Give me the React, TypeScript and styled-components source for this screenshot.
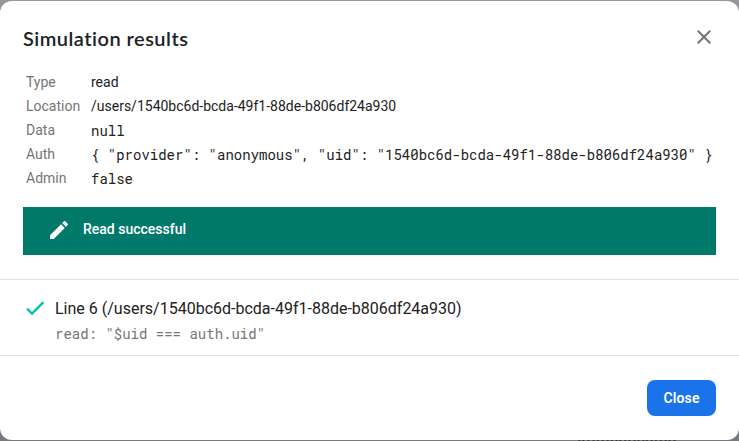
import React from "react";
import styled, { createGlobalStyle } from "styled-components";

const GlobalStyle = createGlobalStyle`
  *, *::before, *::after { box-sizing: border-box; }
  body {
    margin: 0;
    overflow: hidden;
    background: #909296;
    font-family: Roboto, "Liberation Sans", sans-serif;
    color: #212121;
  }
`;

const Page = styled.div`
  position: relative;
  width: 739px;
  height: 441px;
  overflow: hidden;
  padding-top: 1px;
  background: linear-gradient(#94969a 0 30px, #77797c 420px);
`;

const BackdropLabel = styled.div`
  position: absolute;
  left: 576px;
  top: 433px;
  font: 500 16px/18px Roboto, sans-serif;
  color: #33363a;
`;

const Dialog = styled.section`
  position: relative;
  display: flex;
  flex-direction: column;
  height: 439px;
  border-radius: 12px;
  background: #fff;
`;

const Header = styled.header`
  display: flex;
  justify-content: space-between;
  align-items: flex-start;
  height: 69px;
  padding: 24px 23px 0;
`;

const Title = styled.h2`
  margin: -1px 0 0;
  font: 600 20px/28px "Google Sans", Lato, sans-serif;
  letter-spacing: 0.48px;
  color: #202124;
`;

const IconButton = styled.button`
  display: flex;
  padding: 0;
  border: 0;
  background: none;
  color: #757575;
`;

const Details = styled.dl`
  display: grid;
  grid-template-columns: 65px 1fr;
  grid-auto-rows: 24px;
  height: 137px;
  margin: 0;
  padding-left: 26px;
  font-size: 14px;
  line-height: 24px;
`;

const Term = styled.dt`
  color: #757575;
`;

const Value = styled.dd<{ $code?: boolean }>`
  margin: 0;
  white-space: nowrap;
  ${({ $code }) =>
    $code && `padding-top: 1px; font-family: "Roboto Mono", "Liberation Mono", monospace;`}
`;

const Banner = styled.div`
  display: flex;
  gap: 12px;
  height: 48px;
  margin: 0 23px 24px;
  padding: 11px 24px 0;
  background: #00796b;
  color: #fff;
  font: 500 14px/22px Roboto, sans-serif;
`;

const Rule = styled.div`
  display: flex;
  gap: 8px;
  height: 77px;
  padding: 17px 23px 0;
  border: solid #e0e0e0;
  border-width: 1px 0;
`;

const RuleTitle = styled.div`
  font-size: 16px;
  line-height: 24px;
`;

const RuleCode = styled.code`
  display: block;
  padding-top: 2px;
  font: 14px/22px "Roboto Mono", "Liberation Mono", monospace;
  color: #757575;
`;

const Footer = styled.footer`
  display: flex;
  justify-content: flex-end;
  padding: 24px 23px;
`;

const CloseButton = styled.button`
  width: 69px;
  height: 36px;
  padding: 0;
  border: 0;
  border-radius: 8px;
  background: #1a73e8;
  color: #fff;
  font: 600 14px/36px Roboto, sans-serif;
  letter-spacing: 0.15px;
`;

const Icon = ({ d, stroke }: { d: string; stroke?: number }) => (
  <svg
    width={24}
    height={24}
    viewBox="0 0 24 24"
    fill="currentColor"
    stroke={stroke ? "currentColor" : "none"}
    strokeWidth={stroke}
    aria-hidden
  >
    <path d={d} />
  </svg>
);

const CheckSlot = styled.span`
  display: flex;
  margin-top: -1px;
  color: #00bfa5;
`;

const rows = [
  { term: "Type", value: "read" },
  { term: "Location", value: "/users/1540bc6d-bcda-49f1-88de-b806df24a930" },
  { term: "Data", value: "null", code: true },
  {
    term: "Auth",
    value: '{ "provider": "anonymous", "uid": "1540bc6d-bcda-49f1-88de-b806df24a930" }',
    code: true,
  },
  { term: "Admin", value: "false", code: true },
];

export default function App() {
  return (
    <>
      <GlobalStyle />
      <Page>
        <BackdropLabel>Authenticated</BackdropLabel>
        <Dialog role="dialog">
          <Header>
            <Title>Simulation results</Title>
            <IconButton aria-label="Dismiss">
              <Icon d="M19 6.41L17.59 5 12 10.59 6.41 5 5 6.41 10.59 12 5 17.59 6.41 19 12 13.41 17.59 19 19 17.59 13.41 12z" />
            </IconButton>
          </Header>
          <Details>
            {rows.map(({ term, value, code }) => (
              <React.Fragment key={term}>
                <Term>{term}</Term>
                <Value $code={code}>{value}</Value>
              </React.Fragment>
            ))}
          </Details>
          <Banner>
            <Icon d="M3 17.25V21h3.75L17.81 9.94l-3.75-3.75L3 17.25zM20.71 7.04c.39-.39.39-1.02 0-1.41l-2.34-2.34c-.39-.39-1.02-.39-1.41 0l-1.83 1.83 3.75 3.75 1.83-1.83z" />
            Read successful
          </Banner>
          <Rule>
            <CheckSlot>
              <Icon stroke={0.4} d="M9 16.17L4.83 12l-1.42 1.41L9 19 21 7l-1.41-1.41z" />
            </CheckSlot>
            <div>
              <RuleTitle>Line 6 (/users/1540bc6d-bcda-49f1-88de-b806df24a930)</RuleTitle>
              <RuleCode>read: "$uid === auth.uid"</RuleCode>
            </div>
          </Rule>
          <Footer>
            <CloseButton>Close</CloseButton>
          </Footer>
        </Dialog>
      </Page>
    </>
  );
}
